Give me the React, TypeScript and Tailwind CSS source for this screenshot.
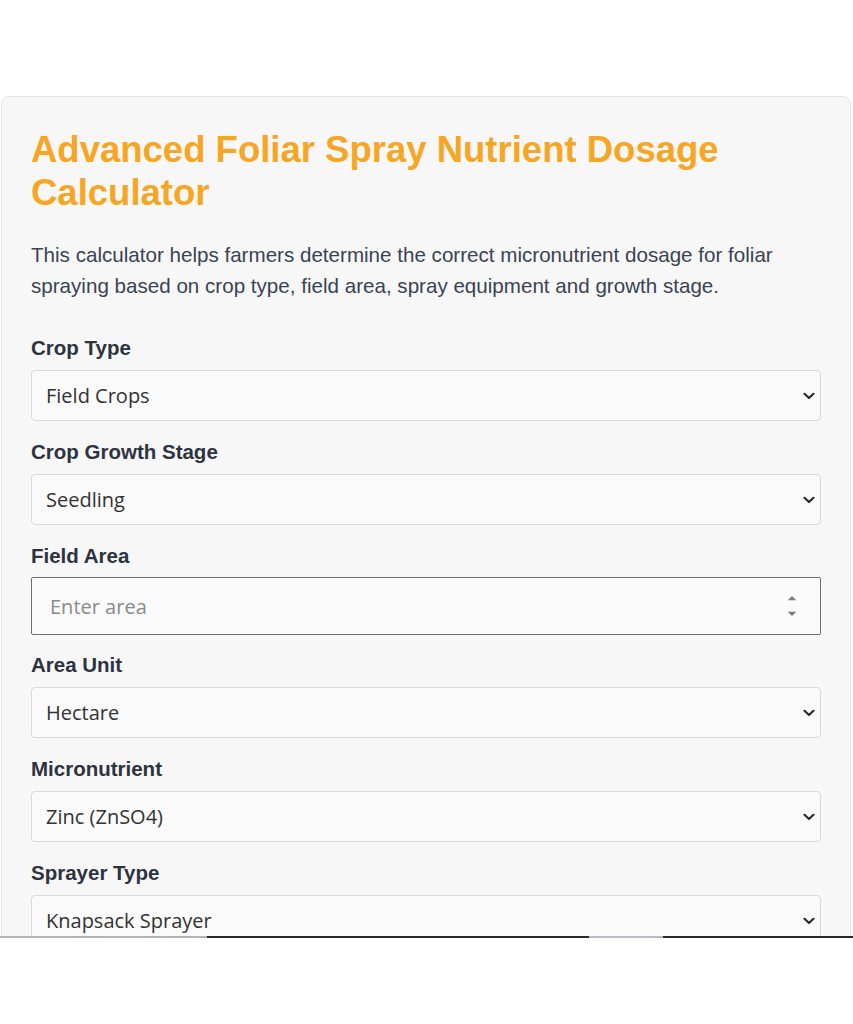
import React from "react";

function Chevron() {
  return (
    <svg
      className="pointer-events-none absolute right-[6px] top-1/2 -translate-y-1/2"
      width="12"
      height="8"
      viewBox="0 0 12 8"
      fill="none"
    >
      <path d="M1.5 1.8 L6 6 L10.5 1.8" stroke="#2b2b2b" strokeWidth="2.2" strokeLinecap="round" strokeLinejoin="round" />
    </svg>
  );
}

function SelectField({ label, value }: { label: string; value: string }) {
  return (
    <div className="mb-[20px]">
      <label className="block mb-[10px] text-[20.5px] leading-[22px] pb-[1px] font-bold text-[#2d3340] [font-family:'Liberation_Sans',Arial,sans-serif]">
        {label}
      </label>
      <div className="relative">
        <select
          defaultValue={value}
          className="appearance-none block w-full h-[51px] rounded-[4px] border border-[#d9d9d9] bg-[#fafafa] pl-[14px] pr-[30px] text-[20px] text-[#333] outline-none [font-family:'Open_Sans',sans-serif]"
        >
          <option>{value}</option>
        </select>
        <Chevron />
      </div>
    </div>
  );
}

export default function App() {
  return (
    <div className="w-[853px] h-[1024px] bg-white flex flex-col overflow-hidden">
      <div className="h-[96px] shrink-0" />
      <div className="h-[840px] shrink-0 overflow-hidden pl-[1px]">
        <div className="w-[850px] rounded-[8px] border border-[#e4e4e4] bg-[#f7f7f7] px-[29px] pt-[31px] pb-[60px]">
          <h1 className="text-[36.5px] leading-[43px] font-bold text-[#f6a623] [font-family:'Liberation_Sans',Arial,sans-serif]">
            Advanced Foliar Spray Nutrient Dosage Calculator
          </h1>
          <p className="mt-[25px] mb-[36px] text-[20.6px] leading-[31px] text-[#3a4354] [font-family:'Liberation_Sans',Arial,sans-serif]">
            This calculator helps farmers determine the correct micronutrient dosage for foliar spraying based on crop type, field area, spray equipment and growth stage.
          </p>

          <SelectField label="Crop Type" value="Field Crops" />
          <SelectField label="Crop Growth Stage" value="Seedling" />

          <div className="mb-[19px]">
            <label className="block mb-[9px] text-[20.5px] leading-[22px] pb-[1px] font-bold text-[#2d3340] [font-family:'Liberation_Sans',Arial,sans-serif]">
              Field Area
            </label>
            <div className="relative">
              <input
                type="text"
                placeholder="Enter area"
                className="block w-full h-[58px] rounded-[2px] border border-[#6f6f6f] bg-[#fafafa] pl-[18px] pr-[40px] text-[20px] text-[#333] placeholder:text-[#8a8a8a] outline-none [font-family:'Open_Sans',sans-serif]"
              />
              <div className="pointer-events-none absolute right-[24px] top-1/2 -translate-y-1/2 flex flex-col items-center gap-[11px]">
                <svg width="10" height="5" viewBox="0 0 10 5"><path d="M0.5 5 L5 0.5 L9.5 5 Z" fill="#7a7a7a" /></svg>
                <svg width="10" height="5" viewBox="0 0 10 5"><path d="M0.5 0 L5 4.5 L9.5 0 Z" fill="#7a7a7a" /></svg>
              </div>
            </div>
          </div>

          <SelectField label="Area Unit" value="Hectare" />
          <SelectField label="Micronutrient" value="Zinc (ZnSO4)" />
          <SelectField label="Sprayer Type" value="Knapsack Sprayer" />
        </div>
      </div>
      <div className="h-[2px] shrink-0 flex">
        <div className="w-[207px] bg-[#b3b3b3]" />
        <div className="w-[382px] bg-[#2a2a2a]" />
        <div className="w-[74px] bg-[#b9bcc6]" />
        <div className="flex-1 bg-[#2a2a2a]" />
      </div>
      <div className="flex-1 bg-white" />
    </div>
  );
}
